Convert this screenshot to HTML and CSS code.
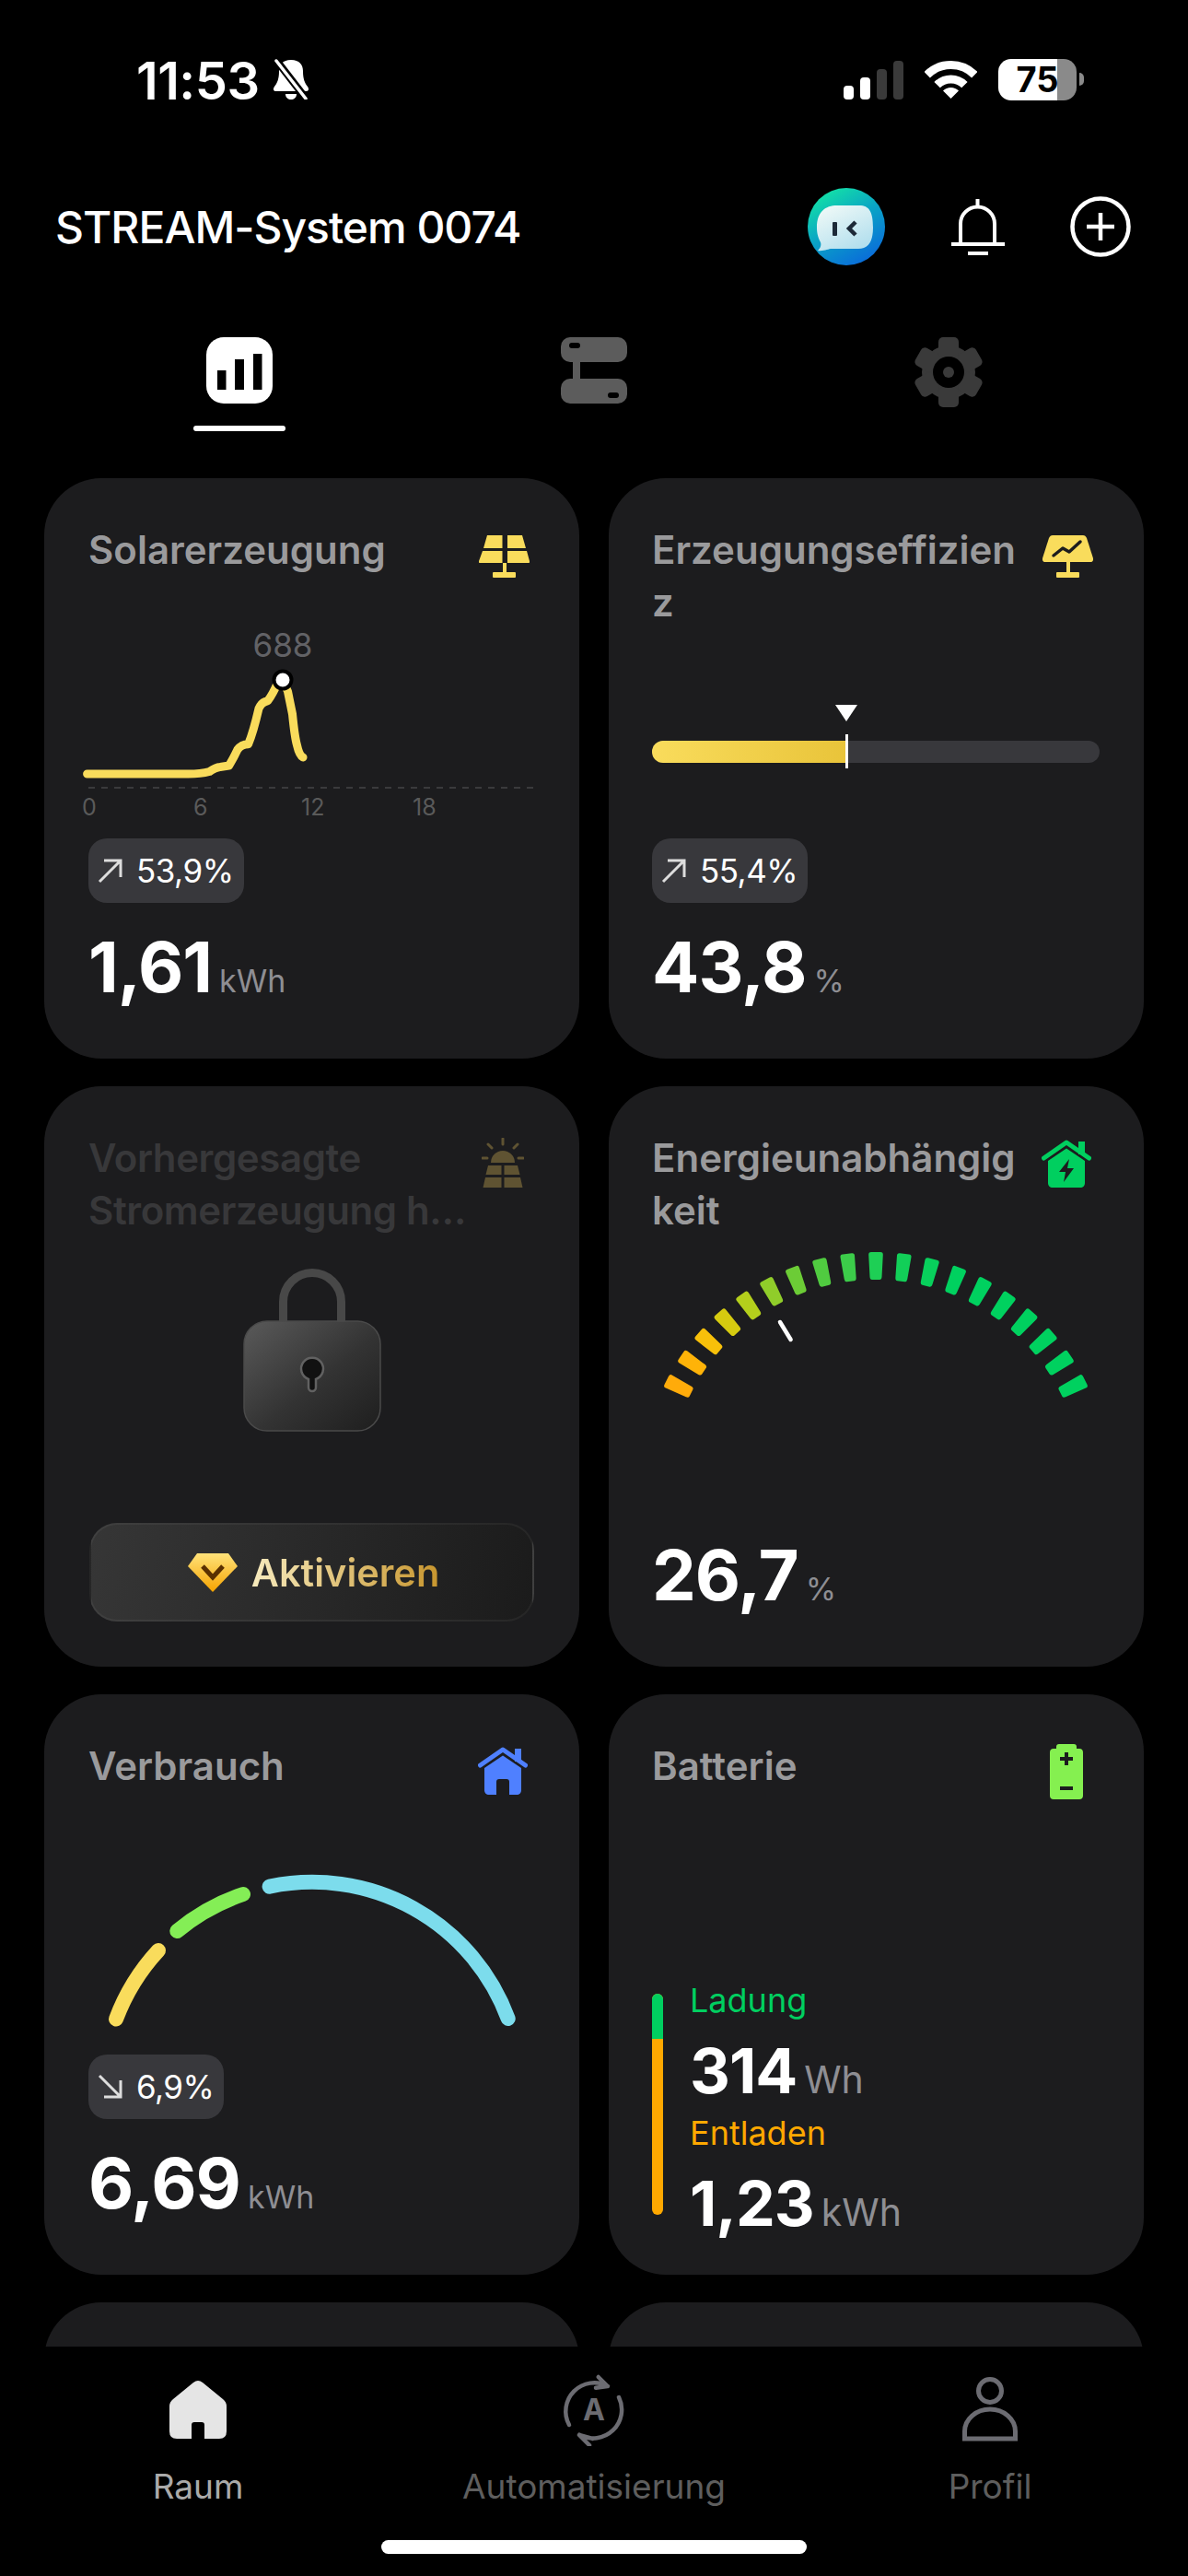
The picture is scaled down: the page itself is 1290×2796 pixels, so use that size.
FILE: index.html
```html
<!DOCTYPE html>
<html lang="de">
<head>
  <meta charset="UTF-8" />
  <meta name="viewport" content="width=device-width, initial-scale=1.0" />
  <title>STREAM-System 0074</title>
  <link rel="stylesheet" href="styles.css">
</head>
<body>
  <div class="status">
    <div class="status-left">
      <span class="time">11:53</span>
      <svg class="mute" viewBox="0 0 42 44" width="42" height="44">
        <path fill="#fff" d="M21 1C12 1 8 6 8 13c0 9-2 13-5 17-2 3-1 5 2 5h32c3 0 4-2 2-5-3-4-5-8-5-17C34 6 30 1 21 1z"/>
        <path fill="#fff" d="M15 38h12c0 4-3 6-6 6s-6-2-6-6z"/>
        <path stroke="#000" stroke-width="8" d="M4 0l34 44"/>
        <path stroke="#fff" stroke-width="3.5" stroke-linecap="round" d="M5 2l32 41"/>
      </svg>
    </div>
    <div class="status-right">
      <svg viewBox="0 0 66 42" width="66" height="42">
        <rect x="1" y="27" width="11" height="15" rx="4" fill="#fff"/>
        <rect x="19" y="18" width="11" height="24" rx="4" fill="#fff"/>
        <rect x="37" y="9" width="11" height="33" rx="4" fill="#3a3a3a"/>
        <rect x="55" y="0" width="11" height="42" rx="4" fill="#3a3a3a"/>
      </svg>
      <svg class="wifi" viewBox="0 0 57 42" width="57" height="42">
        <path fill="none" stroke="#fff" stroke-width="9" d="M2.7 16.2A36.5 36.5 0 0 1 54.3 16.2"/>
        <path fill="none" stroke="#fff" stroke-width="9" d="M13.6 27.1A21 21 0 0 1 43.4 27.1"/>
        <path fill="#fff" d="M28.5 42L20 33.5A12 12 0 0 1 37 33.5Z"/>
      </svg>
      <div class="batt">75</div>
      <div class="batt-nub"></div>
    </div>
  </div>

  <div class="topbar">
    <div class="system-name">STREAM-System 0074</div>
    <div class="avatar">
      <svg viewBox="0 0 84 84" width="84" height="84">
        <defs>
          <linearGradient id="av" x1="0.2" y1="0" x2="0.8" y2="1">
            <stop offset="0" stop-color="#14e6a4"/>
            <stop offset="0.45" stop-color="#0aa6c4"/>
            <stop offset="1" stop-color="#0a66dc"/>
          </linearGradient>
          <linearGradient id="bub" x1="0" y1="0" x2="0.6" y2="1">
            <stop offset="0" stop-color="#f4fbf8"/>
            <stop offset="1" stop-color="#b4e0ee"/>
          </linearGradient>
        </defs>
        <circle cx="42" cy="42" r="42" fill="url(#av)"/>
        <path fill="url(#bub)" d="M32 19h24c11 0 15 7 15 24 0 15-5 23-16 23H26c-3 0-9 3-15 2 3-3 4-6 3-9-3-5-4-11-4-16 0-17 9-24 22-24z"/>
        <rect x="27" y="37" width="5" height="15" rx="1" fill="#1d2a38"/>
        <path d="M52 37l-7 7 7 7" fill="none" stroke="#1d2a38" stroke-width="4.5"/>
      </svg>
    </div>
    <svg class="bell" viewBox="0 0 60 62" width="60" height="62">
      <path fill="none" stroke="#fff" stroke-width="4" d="M29.5 1v8M11 49V28a18.500 18.500 0 0 1 37 0v21M1 50h58M19 60h22"/>
    </svg>
    <svg class="plus" viewBox="0 0 66 66" width="66" height="66">
      <circle cx="33" cy="33" r="30.500" fill="none" stroke="#fff" stroke-width="4.500"/>
      <path fill="none" stroke="#fff" stroke-width="4.500" d="M18 33h30M33 18v30"/>
    </svg>
  </div>

  <div class="tabs">
    <div class="tab">
      <svg viewBox="0 0 72 72" width="72" height="72">
        <rect width="72" height="72" rx="19" fill="#fff"/>
        <rect x="12" y="36" width="9.500" height="21" fill="#000"/>
        <rect x="31" y="24" width="10" height="33" fill="#000"/>
        <rect x="51" y="18" width="9.500" height="39" fill="#000"/>
      </svg>
      <div class="tab-line"></div>
    </div>
    <div class="tab">
      <svg viewBox="0 0 72 72" width="72" height="72">
        <rect y="0" width="72" height="27" rx="10" fill="#5c5c5c"/>
        <rect y="45" width="72" height="27" rx="10" fill="#5c5c5c"/>
        <rect x="13" y="26" width="8" height="20" fill="#5c5c5c"/>
        <rect x="9" y="6" width="12" height="6" rx="3" fill="#000"/>
        <rect x="51" y="60" width="12" height="6" rx="3" fill="#000"/>
      </svg>
    </div>
    <div class="tab">
      <svg viewBox="0 0 76 76" width="76" height="76">
        <g fill="#3a3a3a">
          <circle cx="38" cy="38" r="29"/>
          <rect x="27" y="0" width="22" height="22" rx="5"/>
          <rect x="27" y="0" width="22" height="22" rx="5" transform="rotate(60 38 38)"/>
          <rect x="27" y="0" width="22" height="22" rx="5" transform="rotate(120 38 38)"/>
          <rect x="27" y="0" width="22" height="22" rx="5" transform="rotate(180 38 38)"/>
          <rect x="27" y="0" width="22" height="22" rx="5" transform="rotate(240 38 38)"/>
          <rect x="27" y="0" width="22" height="22" rx="5" transform="rotate(300 38 38)"/>
        </g>
        <circle cx="38" cy="38" r="17" fill="#000"/>
        <circle cx="38" cy="38" r="6" fill="#3a3a3a"/>
      </svg>
    </div>
  </div>

  <div class="cards">
    <div class="card">
      <div class="head">
        <div class="title">Solarerzeugung</div>
        <svg class="ico ico-solar" viewBox="0 0 55 48" width="55" height="48">
          <g fill="#f9dc5c">
            <path d="M9 1h16.500v14H5z"/>
            <path d="M31 1h16l4 14H31z"/>
            <path d="M4 18h21.500v13H1.500C0 31-.5 30 0 29z"/>
            <path d="M31 18h21l3 11c.5 1 0 2-1.500 2H31z"/>
            <rect x="26" y="31" width="4" height="11"/>
            <rect x="15" y="41" width="25" height="6" rx="1"/>
          </g>
        </svg>
      </div>
      <svg class="sun-chart" viewBox="0 0 500 210" width="500" height="210">
        <path fill="none" stroke="#f9dc5c" stroke-width="9" stroke-linecap="round" stroke-linejoin="round"
          d="M6.600 160H116.600Q130 160 139.500 157.500Q146 153 151 152.500L160.600 151Q165 144 170 133.500Q174 128 181.600 127.700Q187 115 193 89Q196 82 202.700 80.800Q208 74 214 60L219 58L224.500 70.500L229.500 95Q232 120 234.400 128.500Q237 140 241 142"/>
        <path class="dash" d="M8 175H495"/>
        <circle cx="219" cy="58" r="9.500" fill="#fff" stroke="#000" stroke-width="4"/>
        <text class="peak" x="219" y="33" text-anchor="middle">688</text>
        <text class="axis" x="1" y="205">0</text>
        <text class="axis" x="122" y="205">6</text>
        <text class="axis" x="239" y="205">12</text>
        <text class="axis" x="360" y="205">18</text>
      </svg>
      <div class="foot">
        <div class="pill">
          <svg viewBox="0 0 28 28" width="28" height="28"><path class="arrow" d="M2 26L25 3M7 3h18v18"/></svg>
          <span>53,9%</span>
        </div>
        <div class="value"><span class="num">1,61</span><span class="unit">kWh</span></div>
      </div>
    </div>

    <div class="card">
      <div class="head tall">
        <div class="title">Erzeugungseffizien<br>z</div>
        <svg class="ico" viewBox="0 0 55 48" width="55" height="48">
          <path fill="#f9dc5c" d="M11 1h33c2 0 3 1 4 3l7 22c.5 2-.5 4-3 4H3c-2.500 0-3.500-2-3-4L7 4c1-2 2-3 4-3z"/>
          <path fill="none" stroke="#1c1c1e" stroke-width="3.500" stroke-linecap="round" stroke-linejoin="round" d="M12 23l10-8 7 4 12-11"/>
          <g fill="#f9dc5c">
            <rect x="26" y="30" width="4" height="12"/>
            <rect x="15" y="41" width="25" height="6" rx="1"/>
          </g>
        </svg>
      </div>
      <div class="eff-track">
        <div class="eff-fill"></div>
        <div class="eff-mark"></div>
        <div class="eff-tri"></div>
      </div>
      <div class="foot">
        <div class="pill">
          <svg viewBox="0 0 28 28" width="28" height="28"><path class="arrow" d="M2 26L25 3M7 3h18v18"/></svg>
          <span>55,4%</span>
        </div>
        <div class="value"><span class="num">43,8</span><span class="unit">%</span></div>
      </div>
    </div>

    <div class="card">
      <div class="head tall">
        <div class="title dim">Vorhergesagte<br>Stromerzeugung h…</div>
        <svg class="ico-fore" viewBox="0 0 46 55" width="46" height="55">
          <g fill="#5f5332">
            <path d="M10 27a13 13 0 0 1 26 0z"/>
            <path d="M7 30h14.500v10H4.500z"/>
            <path d="M24.500 30H39l2.500 10h-17z"/>
            <path d="M4 43h17.500v11H1.500z"/>
            <path d="M24.500 43H42l2.500 11h-20z"/>
          </g>
          <path stroke="#5f5332" stroke-width="3" stroke-linecap="round" d="M23 1v6M7 7l4 4M39 7l-4 4M1 22h5M45 22h-5"/>
        </svg>
      </div>
      <svg class="lock" viewBox="0 0 150 178" width="150" height="178">
        <defs>
          <linearGradient id="lockBody" x1="0" y1="0" x2="1" y2="1">
            <stop offset="0" stop-color="#5a5a5a"/>
            <stop offset="0.55" stop-color="#333"/>
            <stop offset="1" stop-color="#1e1e1e"/>
          </linearGradient>
        </defs>
        <path fill="none" stroke="#484848" stroke-width="9" d="M43.500 60V36a31.500 31.500 0 0 1 63 0v24"/>
        <rect x="1" y="57" width="148" height="119" rx="25" fill="url(#lockBody)" stroke="#4a4a4a" stroke-width="1.500"/>
        <path fill="#111" stroke="#616161" stroke-width="2.500" d="M71 120a12 12 0 1 1 8 0v9a4 4 0 0 1-8 0z"/>
      </svg>
      <div class="activate">
        <svg viewBox="0 0 54 42" width="54" height="42">
          <defs>
            <linearGradient id="gem" x1="0" y1="0" x2="0" y2="1">
              <stop offset="0" stop-color="#ffe27a"/>
              <stop offset="1" stop-color="#f5a300"/>
            </linearGradient>
          </defs>
          <path fill="url(#gem)" d="M10 0h34l10 14-27 28L0 14z"/>
          <path fill="none" stroke="#5a3000" stroke-width="5" d="M16 14l11 12 11-12"/>
        </svg>
        <span class="activate-text">Aktivieren</span>
      </div>
    </div>

    <div class="card">
      <div class="head tall">
        <div class="title">Energieunabhängig<br>keit</div>
        <svg class="ico-house" viewBox="0 0 54 52" width="54" height="52">
          <g fill="#00cf5f">
            <rect x="40" y="2" width="7" height="14"/>
            <path d="M7 23L27 9.500 47 23v24c0 3-2 5-5 5H12c-3 0-5-2-5-5z"/>
          </g>
          <path fill="none" stroke="#00cf5f" stroke-width="5" stroke-linecap="round" stroke-linejoin="round" d="M2.500 20L27 3l24.500 17"/>
          <path fill="#1c1c1e" d="M30 21L19 35h7l-2 11 11-15h-7z"/>
        </svg>
      </div>
      <svg class="ring" viewBox="0 0 462 170" width="462" height="170">
        <defs>
          <path id="tick" d="M-5-255H5Q8-255 7.800-252L6.500-228Q6.300-225 4-225H-4Q-6.300-225-6.500-228L-7.800-252Q-8-255-5-255Z"/>
        </defs>
        <g transform="translate(231 259)">
          <use href="#tick" fill="#ffab0a" transform="rotate(-63)"/>
          <use href="#tick" fill="#ffb308" transform="rotate(-56)"/>
          <use href="#tick" fill="#f8c00a" transform="rotate(-49)"/>
          <use href="#tick" fill="#d6cb10" transform="rotate(-42)"/>
          <use href="#tick" fill="#b4cf1c" transform="rotate(-35)"/>
          <use href="#tick" fill="#90cd2a" transform="rotate(-28)"/>
          <use href="#tick" fill="#6ccc36" transform="rotate(-21)"/>
          <use href="#tick" fill="#50cb40" transform="rotate(-14)"/>
          <use href="#tick" fill="#3ccc4a" transform="rotate(-7)"/>
          <use href="#tick" fill="#1ecf55" transform="rotate(0)"/>
          <use href="#tick" fill="#12cf58" transform="rotate(7)"/>
          <use href="#tick" fill="#08d05c" transform="rotate(14)"/>
          <use href="#tick" fill="#00d15f" transform="rotate(21)"/>
          <use href="#tick" fill="#00d15f" transform="rotate(28)"/>
          <use href="#tick" fill="#00d15f" transform="rotate(35)"/>
          <use href="#tick" fill="#00d15f" transform="rotate(42)"/>
          <use href="#tick" fill="#00d15f" transform="rotate(49)"/>
          <use href="#tick" fill="#00d15f" transform="rotate(56)"/>
          <use href="#tick" fill="#00d15f" transform="rotate(63)"/>
        </g>
        <path stroke="#fff" stroke-width="4.500" stroke-linecap="round" d="M127 80l11.600 19"/>
      </svg>
      <div class="foot">
        <div class="value"><span class="num">26,7</span><span class="unit">%</span></div>
      </div>
    </div>

    <div class="card">
      <div class="head">
        <div class="title">Verbrauch</div>
        <svg class="ico-house ico-blue" viewBox="0 0 54 52" width="54" height="52">
          <g fill="#4f80ff">
            <rect x="40" y="2" width="7" height="14"/>
            <path d="M7 23L27 9.500 47 23v24c0 3-2 5-5 5H12c-3 0-5-2-5-5z"/>
          </g>
          <path fill="none" stroke="#4f80ff" stroke-width="5" stroke-linecap="round" stroke-linejoin="round" d="M2.500 20L27 3l24.500 17"/>
          <path fill="#1c1c1e" d="M20 52V38c0-2 1-3 3-3h8c2 0 3 1 3 3v14z"/>
        </svg>
      </div>
      <svg class="use-arc" viewBox="0 0 460 175" width="460" height="175">
        <g fill="none" stroke-width="16" stroke-linecap="round">
          <path stroke="#f9dc5c" d="M16 161.500A226.700 226.700 0 0 1 62 87"/>
          <path stroke="#84ee56" d="M82.300 66A226.700 226.700 0 0 1 154 26"/>
          <path stroke="#7cdcec" d="M182.600 17.700A226.700 226.700 0 0 1 441.700 161"/>
        </g>
      </svg>
      <div class="foot">
        <div class="pill">
          <svg viewBox="0 0 28 28" width="28" height="28"><path class="arrow" d="M2 2l23 23M25 7v18H7"/></svg>
          <span>6,9%</span>
        </div>
        <div class="value"><span class="num">6,69</span><span class="unit">kWh</span></div>
      </div>
    </div>

    <div class="card">
      <div class="head">
        <div class="title">Batterie</div>
        <svg class="ico-batt" viewBox="0 0 36 60" width="36" height="60">
          <path fill="#85f050" d="M10 0h16c2 0 3 1 3 3v2h3c2.500 0 4 1.500 4 4v47c0 2.500-1.500 4-4 4H4c-2.500 0-4-1.500-4-4V9c0-2.500 1.500-4 4-4h3V3c0-2 1-3 3-3z"/>
          <path fill="#1c1c1e" d="M16 9h4v5h5v4h-5v5h-4v-5h-5v-4h5zM11 46h14v4H11z"/>
        </svg>
      </div>
      <div class="batt-stats">
        <div class="batt-bar"><div class="batt-bar-in"></div></div>
        <div>
          <div class="stat-label charge">Ladung</div>
          <div class="value small"><span class="num">314</span><span class="unit">Wh</span></div>
          <div class="stat-label discharge">Entladen</div>
          <div class="value small"><span class="num">1,23</span><span class="unit">kWh</span></div>
        </div>
      </div>
    </div>

    <div class="card"></div>
    <div class="card"></div>
  </div>

  <div class="nav">
    <div class="nav-item active">
      <div class="nav-icon">
        <svg viewBox="0 0 62 64" width="62" height="64">
          <path fill="#e5e5e5" d="M26 3q5-4 10 0l22 18q4 3 4 8v27q0 8-8 8H38V49q0-3-3-3h-8q-3 0-3 3v15H8q-8 0-8-8V29q0-5 4-8z"/>
        </svg>
      </div>
      <span>Raum</span>
    </div>
    <div class="nav-item">
      <div class="nav-icon">
        <svg viewBox="0 0 80 80" width="80" height="80">
          <g fill="none" stroke="#6c6c72" stroke-width="4.500" stroke-linecap="round" stroke-linejoin="round">
            <path d="M13 57A31 31 0 0 1 55 15M44.700 5L54.700 15 42 16.700"/>
            <path d="M67 27A31 31 0 0 1 24.200 67.700M35 79L24 68l14.600 4"/>
          </g>
          <text class="auto-a" x="40" y="52" text-anchor="middle">A</text>
        </svg>
      </div>
      <span>Automatisierung</span>
    </div>
    <div class="nav-item">
      <div class="nav-icon">
        <svg viewBox="0 0 60 70" width="60" height="70">
          <g fill="none" stroke="#6c6c72" stroke-width="5">
            <circle cx="30" cy="15" r="12.500"/>
            <path d="M2.500 67V59a27.500 24 0 0 1 55 0v8z"/>
          </g>
        </svg>
      </div>
      <span>Profil</span>
    </div>
  </div>
  <div class="home-bar"></div>
</body>
</html>
```

FILE: styles.css
```css
* {
  box-sizing: border-box;
}
body {
  margin: 0;
  width: 1290px;
  height: 2796px;
  overflow: hidden;
  background-color: #000;
  color: #fff;
  font-family: Inter, "Noto Sans", sans-serif;
}
svg {
  display: block;
  flex: none;
}

/* status bar */
.status {
  height: 176px;
  padding: 64px 113px 0 148px;
  display: flex;
  justify-content: space-between;
  align-items: flex-start;
}
.status-left {
  display: flex;
  align-items: center;
  gap: 13px;
  height: 44px;
}
.time {
  font-size: 56px;
  font-weight: 600;
  letter-spacing: -0.5px;
  line-height: 44px;
  padding-top: 4px;
}
.status-right {
  display: flex;
  align-items: flex-start;
}
.status-right > svg {
  margin-top: 2px;
}
.status-right .wifi {
  margin: 1px 23px 0 23px;
}
.batt {
  width: 85px;
  height: 45px;
  border-radius: 14px;
  background: linear-gradient(90deg, #fff 75%, #8a8a8a 75%);
  color: #000;
  font-size: 38px;
  font-weight: 700;
  line-height: 45px;
  text-align: center;
}
.batt-nub {
  width: 5px;
  height: 14px;
  margin: 15px 0 0 3px;
  border-radius: 0 5px 5px 0;
  background: #8a8a8a;
}

/* system name row */
.topbar {
  height: 140px;
  padding: 0 62px 0 60px;
  display: flex;
  align-items: center;
}
.system-name {
  flex: 1;
  font-size: 48px;
  font-weight: 500;
  letter-spacing: -1px;
}
.bell {
  margin-left: 71px;
}
.plus {
  margin-left: 70px;
}

/* top tabs */
.tabs {
  height: 203px;
  padding: 50px 67px 0;
  display: grid;
  grid-template-columns: repeat(3, 1fr);
}
.tab {
  display: flex;
  flex-direction: column;
  align-items: center;
}
.tab-line {
  width: 100px;
  height: 6px;
  margin-top: 24px;
  border-radius: 3px;
  background: #fff;
}

/* cards */
.cards {
  height: 2028px;
  padding: 0 48px;
  overflow: hidden;
  display: grid;
  grid-template-columns: 1fr 1fr;
  grid-auto-rows: 630px;
  gap: 30px 32px;
}
.card {
  min-width: 0;
  padding: 48px 48px 0;
  border-radius: 62px;
  background: #1c1c1e;
  display: flex;
  flex-direction: column;
}
.card:nth-child(even) {
  padding-left: 47px;
}
.head {
  height: 61px;
  display: flex;
  justify-content: space-between;
  align-items: flex-start;
}
.head.tall {
  height: 114px;
}
.title {
  padding-top: 1px;
  font-size: 42px;
  font-weight: 600;
  line-height: 57px;
  color: #9a9a9c;
  white-space: nowrap;
}
.title.dim {
  color: #38383a;
  letter-spacing: -0.4px;
}
.ico {
  margin: 13px 7px 0 0;
}
.ico-solar {
  margin-right: 6px;
}
.ico-fore {
  margin: 8px 12px 0 0;
}
.ico-house {
  margin: 10px 9px 0 0;
}
.ico-blue {
  margin: 9px 8px 0 0;
}
.ico-batt {
  margin: 6px 18px 0 0;
}
.foot {
  margin-top: auto;
  padding-bottom: 39px;
}
.pill {
  display: inline-flex;
  align-items: center;
  gap: 14px;
  height: 70px;
  margin-bottom: 24px;
  padding: 0 11px 0 10px;
  border-radius: 20px;
  background: #38383c;
  font-size: 35px;
  letter-spacing: -0.5px;
  vertical-align: top;
}
.arrow {
  fill: none;
  stroke: #ddd;
  stroke-width: 3;
}
.value {
  display: flex;
  align-items: baseline;
  line-height: 90px;
}
.num {
  font-size: 76px;
  font-weight: 700;
  letter-spacing: -1px;
}
.unit {
  margin-left: 8px;
  font-size: 34px;
  color: #8e8e93;
}

/* solar chart */
.sun-chart {
  margin: 52px 0 0 -8px;
}
.dash {
  fill: none;
  stroke: #3a3a3c;
  stroke-width: 2;
  stroke-dasharray: 7 7;
}
.peak {
  font-size: 35px;
  fill: #626266;
}
.axis {
  font-size: 25px;
  fill: #5a5a5a;
}

/* efficiency bar */
.eff-track {
  position: relative;
  height: 24px;
  margin-top: 123px;
  border-radius: 12px;
  background: #38383c;
}
.eff-fill {
  width: 210px;
  height: 24px;
  border-radius: 12px 0 0 12px;
  background: linear-gradient(90deg, #f9dc5c, #e9c43a);
}
.eff-mark {
  position: absolute;
  left: 210px;
  top: -7px;
  width: 3px;
  height: 37px;
  background: #fff;
}
.eff-tri {
  position: absolute;
  left: 199px;
  top: -39px;
  border-left: 12px solid transparent;
  border-right: 12px solid transparent;
  border-top: 18px solid #fff;
}

/* locked forecast */
.lock {
  margin: 36px auto 0;
}
.activate {
  height: 107px;
  margin: auto 1px 49px;
  padding-left: 4px;
  border: 2px solid rgba(255, 255, 255, 0.05);
  border-radius: 30px;
  background: linear-gradient(100deg, #363636, #1b1b1b);
  display: flex;
  align-items: center;
  justify-content: center;
  gap: 15px;
}
.activate-text {
  font-size: 41.5px;
  font-weight: 600;
  background: linear-gradient(90deg, #f7ebbe, #c8962e);
  -webkit-background-clip: text;
  background-clip: text;
  color: transparent;
}

/* gauges */
.ring {
  margin: 14px 0 0 12px;
}
.use-arc {
  margin: 82px 0 0 14px;
}

/* battery */
.batt-stats {
  margin-top: 203px;
  display: flex;
  gap: 29px;
}
.batt-bar {
  width: 12px;
  height: 240px;
  margin-top: 13px;
  border-radius: 6px;
  overflow: hidden;
  background: #ffa800;
}
.batt-bar-in {
  height: 49px;
  background: #00cf60;
}
.stat-label {
  font-size: 36px;
  line-height: 40px;
  margin-bottom: 15px;
}
.charge {
  color: #00cf60;
}
.discharge {
  color: #ffa800;
  margin-top: -3px;
}
.value.small {
  line-height: 82px;
}
.value.small .num {
  font-size: 68px;
}
.value.small .unit {
  font-size: 41px;
}

/* bottom nav */
.nav {
  height: 173px;
  padding-top: 31px;
  display: grid;
  grid-template-columns: repeat(3, 1fr);
}
.nav-item {
  display: flex;
  flex-direction: column;
  align-items: center;
  font-size: 37px;
  line-height: 42px;
  color: #5e5e5e;
}
.nav-item.active {
  color: #aaa;
}
.nav-icon {
  height: 74px;
  margin-bottom: 26px;
  display: flex;
  align-items: center;
}
.auto-a {
  font-size: 32px;
  font-weight: 700;
  fill: #6c6c72;
}
.home-bar {
  width: 462px;
  height: 15px;
  margin: 37px auto 0;
  border-radius: 8px;
  background: #fff;
}
```
